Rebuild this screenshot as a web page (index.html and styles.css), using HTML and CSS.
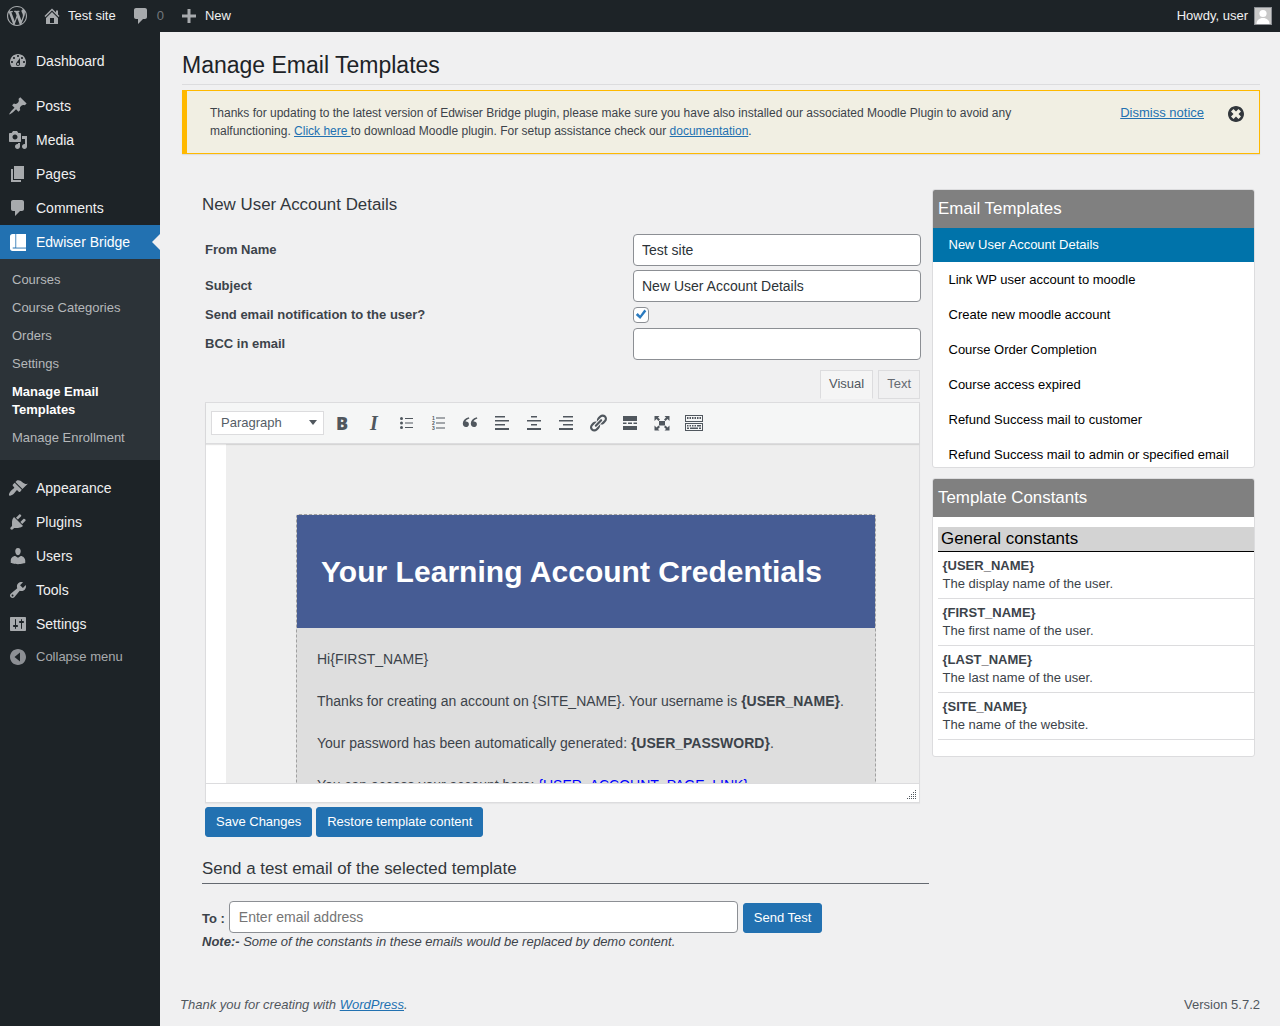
FILE: index.html
```html
<!DOCTYPE html>
<html>
<head>
  <title>Manage Email Templates</title>
  <link rel="stylesheet" href="styles.css">
</head>
<body>
  <!-- Admin bar -->
  <div class="adminbar">
    <svg class="bar-logo" viewBox="0 0 20 20"><path d="M20 10c0-5.51-4.49-10-10-10C4.48 0 0 4.49 0 10c0 5.52 4.48 10 10 10 5.51 0 10-4.48 10-10zM7.78 15.37L4.37 6.22c.55-.02 1.17-.08 1.17-.08.5-.06.44-1.13-.06-1.11 0 0-1.45.11-2.37.11-.18 0-.37 0-.58-.01C4.12 2.69 6.87 1.11 10 1.11c2.33 0 4.45.87 6.05 2.34-.68-.11-1.65.39-1.65 1.58 0 .74.45 1.36.9 2.1.35.61.55 1.36.55 2.46 0 1.49-1.4 5-1.4 5l-3.03-8.37c.54-.02.82-.17.82-.17.5-.05.44-1.25-.06-1.22 0 0-1.44.12-2.38.12-.87 0-2.33-.12-2.33-.12-.5-.03-.56 1.2-.06 1.22l.92.08 1.26 3.41zM17.41 10c.24-.64.74-1.87.43-4.25.7 1.29 1.05 2.71 1.05 4.25 0 3.29-1.73 6.24-4.4 7.78.97-2.59 1.94-5.2 2.92-7.78zM6.1 18.09C3.12 16.65 1.11 13.53 1.11 10c0-1.3.23-2.48.72-3.59C3.25 10.3 4.67 14.2 6.1 18.09zm4.03-6.63l2.58 6.98c-.86.29-1.76.45-2.71.45-.79 0-1.57-.11-2.29-.33.81-2.38 1.62-4.74 2.42-7.1z"/></svg>
    <svg class="bar-icon home" viewBox="0 0 20 20"><path d="M16 8.5l1.53 1.53-1.06 1.06L10 4.62l-6.47 6.47-1.06-1.06L10 2.5l4 4v-2h2v4zm-6-2.46l6 5.99V18H4v-5.97zM12 17v-5H8v5h4z"/></svg>
    <span class="bar-text site">Test site</span>
    <svg class="bar-icon comment" viewBox="0 0 20 20"><path d="M5 2h9c1.1 0 2 .9 2 2v7c0 1.1-.9 2-2 2h-2l-5 5v-5H5c-1.1 0-2-.9-2-2V4c0-1.1.9-2 2-2z"/></svg>
    <span class="bar-text count">0</span>
    <svg class="bar-icon plus" viewBox="0 0 20 20"><path d="M17 8.5v3h-5.5V17h-3v-5.500H3v-3h5.500V3h3v5.500z"/></svg>
    <span class="bar-text">New</span>
    <span class="bar-text howdy">Howdy, user</span>
    <span class="avatar">
      <svg viewBox="0 0 16 16"><circle cx="8" cy="5.500" r="3.600"/><path d="M1.500 16c0-3.600 2.600-6 6.500-6s6.500 2.400 6.500 6z"/></svg>
    </span>
  </div>

  <div class="page">
    <!-- Sidebar -->
    <div class="sidebar">
      <a class="menu-item"><svg viewBox="0 0 20 20"><path d="M3.760 16h12.480c1.100-1.370 1.760-3.110 1.760-5 0-4.420-3.580-8-8-8s-8 3.580-8 8c0 1.890.660 3.630 1.760 5zM10 4c.550 0 1 .450 1 1s-.450 1-1 1-1-.450-1-1 .450-1 1-1zM6 6c.550 0 1 .450 1 1s-.450 1-1 1-1-.450-1-1 .450-1 1-1zm8 0c.550 0 1 .450 1 1s-.450 1-1 1-1-.450-1-1 .450-1 1-1zm-5.370 5.550L12 7v6c0 1.100-.900 2-2 2s-2-.900-2-2c0-.570.240-1.080.630-1.450zM4 10c.550 0 1 .450 1 1s-.450 1-1 1-1-.450-1-1 .450-1 1-1zm12 0c.550 0 1 .450 1 1s-.450 1-1 1-1-.450-1-1 .450-1 1-1zm-5 3c0-.550-.450-1-1-1s-1 .450-1 1 .450 1 1 1 1-.450 1-1z"/></svg>Dashboard</a>
      <div class="menu-sep"></div>
      <a class="menu-item"><svg viewBox="0 0 20 20"><path d="M10.440 3.020l1.820-1.820 6.360 6.350-1.830 1.820c-1.050-.680-2.480-.570-3.410.360l-.750.750c-.920.930-1.040 2.350-.350 3.410l-1.830 1.820-2.410-2.410-2.800 2.790c-.420.420-3.380 2.710-3.800 2.290s1.860-3.390 2.280-3.810l2.790-2.790L4.100 9.360l1.830-1.820c1.050.690 2.480.570 3.400-.360l.750-.750c.930-.920 1.050-2.350.360-3.410z"/></svg>Posts</a>
      <a class="menu-item"><svg viewBox="0 0 20 20"><path d="M13 11V4c0-.550-.450-1-1-1h-1.670L9 1H5L3.670 3H2c-.550 0-1 .450-1 1v7c0 .550.450 1 1 1h10c.550 0 1-.450 1-1zM7 4.500c1.380 0 2.500 1.120 2.500 2.500S8.380 9.500 7 9.500 4.500 8.380 4.500 7 5.620 4.500 7 4.500zM14 6h5v10.500c0 1.380-1.120 2.500-2.500 2.500S14 17.880 14 16.500s1.120-2.500 2.500-2.500c.170 0 .340.020.500.050V9h-3V6zm-4 8.050V13h2v3.500c0 1.380-1.120 2.500-2.500 2.500S7 17.880 7 16.500 8.120 14 9.500 14c.170 0 .340.020.500.050z"/></svg>Media</a>
      <a class="menu-item"><svg viewBox="0 0 20 20"><path d="M6 15V2h10v13H6zm-1 1h8v2H3V5h2v11z"/></svg>Pages</a>
      <a class="menu-item"><svg viewBox="0 0 20 20"><path d="M5 2h9c1.100 0 2 .900 2 2v7c0 1.100-.900 2-2 2h-2l-5 5v-5H5c-1.100 0-2-.900-2-2V4c0-1.100.900-2 2-2z"/></svg>Comments</a>
      <a class="menu-item active"><svg viewBox="0 0 20 20"><path d="M8.200 2H18v13.600H8.200z"/><path d="M7.400 2H4.500C3 2 2 3 2 4.500v12C2 18 3 19 4.500 19H18v-2.600H5.200c-.500 0-.800-.200-.800-.500s.300-.500.800-.500h2.200z"/></svg>Edwiser Bridge</a>
      <div class="submenu">
        <a>Courses</a>
        <a>Course Categories</a>
        <a>Orders</a>
        <a>Settings</a>
        <a class="current">Manage Email Templates</a>
        <a>Manage Enrollment</a>
      </div>
      <div class="menu-sep"></div>
      <a class="menu-item"><svg viewBox="0 0 20 20"><path d="M14.480 11.060L7.410 3.990l1.500-1.500c.500-.560 2.300-.470 3.510.320 1.210.800 1.430 1.280 2.910 2.100 1.180.640 2.450 1.260 4.450.850zm-.710.710L6.700 4.700 4.930 6.470c-.390.390-.390 1.020 0 1.410l1.060 1.060c.390.390.390 1.030 0 1.420-.600.600-1.430 1.110-2.210 1.690-.350.260-.700.530-1.010.840-1.340 1.340-2.290 3.800-1.560 4.530.750.750 3.240-.240 4.560-1.560.310-.310.580-.660.840-1.010.580-.780 1.090-1.610 1.690-2.210.390-.390 1.030-.390 1.420 0l1.060 1.060c.390.390 1.020.390 1.410 0z"/></svg>Appearance</a>
      <a class="menu-item"><svg viewBox="0 0 20 20"><path d="M13.110 4.360L9.870 7.600 8 5.730l3.240-3.240c.350-.340 1.050-.200 1.560.320.520.510.660 1.210.310 1.550zm-8 1.770l.910-1.120 9.010 9.010-1.190.840c-.710.710-2.630 1.160-3.820 1.160H6.140L4.900 17.260c-.590.590-1.540.590-2.120 0-.590-.580-.590-1.530 0-2.120l1.240-1.240v-3.880c0-1.130.400-3.190 1.090-3.890zm7.260 3.970l3.240-3.240c.340-.350 1.040-.210 1.550.310.520.510.660 1.210.310 1.550l-3.240 3.250z"/></svg>Plugins</a>
      <a class="menu-item"><svg viewBox="0 0 20 20"><path d="M10 9.250c-2.270 0-2.730-3.440-2.730-3.440C7 4.020 7.820 2 9.970 2c2.160 0 2.980 2.020 2.710 3.810 0 0-.410 3.440-2.680 3.440zm0 2.570L12.720 10c2.390 0 4.520 2.330 4.520 4.530v2.490s-3.650 1.130-7.240 1.130c-3.650 0-7.240-1.130-7.240-1.130v-2.490c0-2.250 1.940-4.480 4.470-4.480z"/></svg>Users</a>
      <a class="menu-item"><svg viewBox="0 0 20 20"><path d="M16.680 9.770c-1.340 1.340-3.300 1.670-4.950.990l-5.410 6.520c-.990.990-2.590.990-3.580 0s-.990-2.590 0-3.570l6.520-5.420c-.680-1.650-.350-3.610.990-4.950 1.280-1.280 3.120-1.620 4.720-1.060l-2.890 2.890 2.820 2.820 2.860-2.870c.530 1.580.180 3.390-1.080 4.650zM3.810 16.210c.400.390 1.040.390 1.430 0 .400-.400.400-1.040 0-1.430-.390-.400-1.030-.400-1.430 0-.390.390-.390 1.030 0 1.430z"/></svg>Tools</a>
      <a class="menu-item"><svg viewBox="0 0 20 20"><path d="M18 16V4c0-.550-.450-1-1-1H3c-.550 0-1 .450-1 1v12c0 .550.450 1 1 1h14c.550 0 1-.450 1-1zM8 11h1c.550 0 1 .450 1 1s-.450 1-1 1H8v1.500c0 .280-.220.500-.500.500s-.500-.220-.500-.500V13H6c-.550 0-1-.450-1-1s.450-1 1-1h1V5.500c0-.280.220-.500.500-.500s.500.220.500.500V11zm5-2h-1c-.550 0-1-.450-1-1s.450-1 1-1h1V5.500c0-.280.220-.500.500-.500s.500.220.500.500V7h1c.550 0 1 .450 1 1s-.450 1-1 1h-1v5.500c0 .280-.220.500-.500.500s-.500-.220-.500-.500V9z"/></svg>Settings</a>
      <a class="menu-item collapse"><svg viewBox="0 0 20 20"><path d="M10 18c4.420 0 8-3.580 8-8s-3.580-8-8-8-8 3.580-8 8 3.580 8 8 8zm2-3.500L6.500 10 12 5.500v9z"/></svg>Collapse menu</a>
    </div>

    <!-- Main content -->
    <div class="main">
      <h1 class="page-title">Manage Email Templates</h1>

      <div class="notice">
        <p class="notice-text">Thanks for updating to the latest version of Edwiser Bridge plugin, please make sure you have also installed our associated Moodle Plugin to avoid any malfunctioning. <a href="#">Click here </a>to download Moodle plugin. For setup assistance check our <a href="#">documentation</a>.</p>
        <a class="dismiss" href="#">Dismiss notice</a>
        <svg class="dismiss-icon" viewBox="0 0 20 20"><path d="M10 2c4.420 0 8 3.580 8 8s-3.580 8-8 8-8-3.580-8-8 3.580-8 8-8zm5 10.500L12.500 10 15 7.500 12.500 5 10 7.500 7.500 5 5 7.500 7.500 10 5 12.500 7.500 15 10 12.500 12.500 15z"/></svg>
      </div>

      <div class="columns">
        <div class="left-col">
          <h3 class="section-title">New User Account Details</h3>

          <div class="form-row">
            <label>From Name</label>
            <input type="text" class="field" value="Test site">
          </div>
          <div class="form-row">
            <label>Subject</label>
            <input type="text" class="field" value="New User Account Details">
          </div>
          <div class="form-row check-row">
            <label>Send email notification to the user?</label>
            <span class="checkbox"><svg viewBox="0 0 14 14"><path d="M1.800 7l1.900-1.900 2.400 2.500 4.300-6.100 1.900 1.700L6.200 11z"/></svg></span>
          </div>
          <div class="form-row">
            <label>BCC in email</label>
            <input type="text" class="field">
          </div>

          <div class="editor-tabs">
            <span class="tab tab-on">Visual</span>
            <span class="tab">Text</span>
          </div>

          <div class="editor">
            <div class="toolbar">
              <div class="format-select">Paragraph<span class="caret"></span></div>
              <span class="tool tool-b">B</span>
              <span class="tool tool-i">I</span>
              <span class="tool"><svg viewBox="0 0 20 20"><circle cx="5.500" cy="5.500" r="1.500"/><circle cx="5.500" cy="10" r="1.500"/><circle cx="5.500" cy="14.500" r="1.500"/><rect x="9" y="5" width="8" height="1"/><rect x="9" y="9.500" width="8" height="1"/><rect x="9" y="14" width="8" height="1"/></svg></span>
              <span class="tool"><svg viewBox="0 0 20 20"><text class="ol-num" x="4" y="6.500">1</text><text class="ol-num" x="4" y="11.500">2</text><text class="ol-num" x="4" y="16.500">3</text><rect x="8" y="4.500" width="9" height="1"/><rect x="8" y="9.500" width="9" height="1"/><rect x="8" y="14.500" width="9" height="1"/></svg></span>
              <span class="tool"><svg viewBox="0 0 20 20"><path d="M9.400 5.400C6.800 6.200 5.700 7.500 5.500 8.600c1.800-.300 3.400.800 3.400 2.600 0 1.700-1.300 2.900-2.900 2.900-1.900 0-3.200-1.400-3.200-3.600 0-3 2-5.300 6-6.300zM17.400 5.400c-2.600.800-3.700 2.100-3.900 3.200 1.800-.300 3.400.800 3.400 2.600 0 1.700-1.300 2.900-2.900 2.900-1.900 0-3.200-1.400-3.200-3.600 0-3 2-5.300 6-6.300z"/></svg></span>
              <span class="tool"><svg viewBox="0 0 20 20"><rect x="3" y="3" width="10" height="1.500"/><rect x="3" y="7" width="14" height="1.500"/><rect x="3" y="11" width="10" height="1.500"/><rect x="3" y="15" width="14" height="2"/></svg></span>
              <span class="tool"><svg viewBox="0 0 20 20"><rect x="7" y="3" width="6" height="1.500"/><rect x="3" y="7" width="14" height="1.500"/><rect x="7" y="11" width="6" height="1.500"/><rect x="3" y="15" width="14" height="2"/></svg></span>
              <span class="tool"><svg viewBox="0 0 20 20"><rect x="7" y="3" width="10" height="1.500"/><rect x="3" y="7" width="14" height="1.500"/><rect x="7" y="11" width="10" height="1.500"/><rect x="3" y="15" width="14" height="2"/></svg></span>
              <span class="tool"><svg viewBox="0 0 20 20"><path d="M17.740 2.760c1.680 1.690 1.680 4.410 0 6.100l-1.530 1.520c-1.120 1.120-2.700 1.470-4.140 1.090l2.620-2.610.760-.770.760-.760c.840-.840.840-2.200 0-3.040-.840-.850-2.200-.850-3.040 0l-.770.760-3.380 3.380c-.370-1.440-.020-3.020 1.100-4.140l1.520-1.530c1.690-1.680 4.420-1.680 6.100 0zM8.590 13.430l5.340-5.340c.420-.420.420-1.100 0-1.520-.440-.430-1.130-.390-1.530 0l-5.330 5.340c-.420.420-.420 1.100 0 1.520.440.430 1.130.390 1.520 0zm-.760 2.290l4.140-4.150c.380 1.440.030 3.020-1.090 4.140l-1.520 1.530c-1.690 1.680-4.410 1.680-6.100 0-1.680-1.680-1.680-4.420 0-6.100l1.530-1.520c1.120-1.120 2.700-1.470 4.140-1.100l-4.140 4.150c-.850.840-.850 2.200 0 3.050.840.840 2.200.840 3.040 0z"/></svg></span>
              <span class="tool"><svg viewBox="0 0 20 20"><rect x="3" y="3" width="14" height="5"/><rect x="3" y="9.500" width="3.500" height="1.500"/><rect x="8" y="9.500" width="4" height="1.500"/><rect x="13.500" y="9.500" width="3.500" height="1.500"/><rect x="3" y="13" width="14" height="4"/></svg></span>
              <span class="tool"><svg viewBox="0 0 20 20"><rect x="7" y="8" width="6" height="4.500"/><path d="M2.500 3h5L6 4.500l2 2L6.500 8l-2-2L2.500 8zM17.500 3h-5L14 4.500l-2 2L13.500 8l2-2 2 2zM2.500 17.500h5L6 16l2-2-1.500-1.500-2 2-2-2zM17.500 17.500h-5L14 16l-2-2 1.500-1.500 2 2 2-2z"/></svg></span>
              <span class="tool"><svg class="wide-icon" viewBox="0 0 18 16"><path fill-rule="evenodd" d="M0 0h18v7H0zM1 1v5h16V1zM0 8h18v8H0zM1 9v6h16V9z"/><path d="M2 2h1.500v2H2zM4.500 2H6v2H4.500zM7 2h1.500v2H7zM9.500 2H11v2H9.500zM12 2h1.500v2H12zM14.500 2H16v2h-1.500zM2 10h1.500v1.500H2zM4.500 10H6v1.500H4.500zM7 10h1.500v1.500H7zM9.500 10H11v1.500H9.500zM12 10h4v1.500h-4zM2 12.500h2V14H2zM5 12.500h8V14H5zM14 12.500h2V14h-2z"/></svg></span>
            </div>

            <div class="editor-body">
              <div class="editor-margin"></div>
              <div class="editor-canvas">
                <div class="mail">
                  <div class="mail-head">Your Learning Account Credentials</div>
                  <div class="mail-body">
                    <p>Hi{FIRST_NAME}</p>
                    <p>Thanks for creating an account on {SITE_NAME}. Your username is <b>{USER_NAME}</b>.</p>
                    <p>Your password has been automatically generated: <b>{USER_PASSWORD}</b>.</p>
                    <p>You can access your account here: <a href="#">{USER_ACCOUNT_PAGE_LINK}</a></p>
                  </div>
                </div>
              </div>
            </div>

            <div class="statusbar">
              <svg viewBox="0 0 10 10"><path d="M8 0h1v1H8zM6 2h1v1H6zM8 2h1v1H8zM4 4h1v1H4zM6 4h1v1H6zM8 4h1v1H8zM2 6h1v1H2zM4 6h1v1H4zM6 6h1v1H6zM8 6h1v1H8zM0 8h1v1H0zM2 8h1v1H2zM4 8h1v1H4zM6 8h1v1H6zM8 8h1v1H8z"/></svg>
            </div>
          </div>

          <div class="form-actions">
            <button class="btn">Save Changes</button>
            <button class="btn btn-restore">Restore template content</button>
          </div>

          <h3 class="section-title test-title">Send a test email of the selected template</h3>
          <div class="test-row">
            <b>To :</b>
            <input type="text" class="field test-field" placeholder="Enter email address">
            <button class="btn">Send Test</button>
          </div>
          <p class="test-note"><b>Note:-</b> Some of the constants in these emails would be replaced by demo content.</p>
        </div>

        <div class="right-col">
          <div class="side-box templates">
            <h3 class="side-head">Email Templates</h3>
            <a class="tpl selected">New User Account Details</a>
            <a class="tpl">Link WP user account to moodle</a>
            <a class="tpl">Create new moodle account</a>
            <a class="tpl">Course Order Completion</a>
            <a class="tpl">Course access expired</a>
            <a class="tpl">Refund Success mail to customer</a>
            <a class="tpl">Refund Success mail to admin or specified email</a>
          </div>

          <div class="side-box constants">
            <h3 class="side-head">Template Constants</h3>
            <div class="const-group">
              <div class="const-title">General constants</div>
              <div class="const"><b>{USER_NAME}</b><span>The display name of the user.</span></div>
              <div class="const"><b>{FIRST_NAME}</b><span>The first name of the user.</span></div>
              <div class="const"><b>{LAST_NAME}</b><span>The last name of the user.</span></div>
              <div class="const"><b>{SITE_NAME}</b><span>The name of the website.</span></div>
            </div>
          </div>
        </div>
      </div>

      <div class="footer">
        <i>Thank you for creating with <a href="#">WordPress</a>.</i>
        <span>Version 5.7.2</span>
      </div>
    </div>
  </div>
</body>
</html>
```

FILE: styles.css
```css
* {
  box-sizing: border-box;
}

body {
  margin: 0;
  background: #f0f0f1;
  color: #3c434a;
  font-family: "Liberation Sans", Arial, sans-serif;
  font-size: 13px;
  line-height: 18px;
}

a {
  color: #2271b1;
}

/* Admin bar */
.adminbar {
  display: flex;
  align-items: center;
  height: 32px;
  background: #1d2327;
  color: #f0f0f1;
  fill: #a7aaad;
}

.bar-logo {
  width: 20px;
  height: 20px;
  margin-left: 7px;
  margin-right: 15px;
}

.bar-icon {
  width: 20px;
  height: 20px;
}

.bar-icon.home {
  margin-right: 6px;
}

.bar-text.site {
  margin-right: 15px;
}

.bar-text.count {
  color: #72777c;
  margin-left: 6px;
  margin-right: 15px;
}

.bar-icon.plus {
  margin-right: 6px;
}

.bar-text.howdy {
  margin-left: auto;
  margin-right: 6px;
}

.avatar {
  width: 18px;
  height: 18px;
  margin-right: 8px;
  background: #c8c8c8;
  border: 1px solid #8c8f94;
  fill: #fff;
  overflow: hidden;
}

.avatar svg {
  display: block;
  width: 16px;
  height: 16px;
}

/* Sidebar */
.page {
  display: flex;
  min-height: 994px;
}

.sidebar {
  flex: 0 0 160px;
  background: #1d2327;
  padding-top: 12px;
}

.menu-item {
  position: relative;
  display: flex;
  align-items: center;
  height: 34px;
  padding-left: 8px;
  color: #f0f0f1;
  font-size: 14px;
  fill: #a7aaad;
}

.menu-item svg {
  width: 20px;
  height: 20px;
  margin-right: 8px;
}

.menu-sep {
  height: 11px;
}

.menu-item.active {
  background: #2271b1;
  color: #fff;
  fill: #fff;
}

.menu-item.active::after {
  content: "";
  position: absolute;
  right: 0;
  top: 9px;
  border: 8px solid transparent;
  border-right-color: #f0f0f1;
  border-left-width: 0;
}

.menu-item.collapse {
  padding-bottom: 2px;
  color: #a7aaad;
  font-size: 13px;
  fill: #8c8f94;
}

.submenu {
  background: #2c3338;
  padding: 7px 0 8px;
}

.submenu a {
  display: block;
  padding: 5px 12px;
  color: #b5b8ba;
}

.submenu a.current {
  color: #fff;
  font-weight: bold;
}

/* Main area */
.main {
  flex: 1;
  min-width: 0;
  padding: 18px 20px 0 22px;
}

.page-title {
  margin: 0;
  padding-bottom: 4px;
  border-bottom: 1px solid #dcdcde;
  color: #1d2327;
  font-size: 23px;
  font-weight: 400;
  line-height: 30px;
}

.notice {
  display: flex;
  align-items: flex-start;
  height: 64px;
  margin-top: 5px;
  padding: 13px 13px 0 23px;
  background: #f1efe3;
  border: 1px solid #ffb900;
  border-left-width: 5px;
  box-shadow: 0 1px 1px rgba(0, 0, 0, .08);
  font-size: 12px;
}

.notice-text {
  flex: 0 0 820px;
  margin: 0;
}

.dismiss {
  margin-left: auto;
  font-size: 13px;
  white-space: nowrap;
}

.dismiss-icon {
  width: 20px;
  height: 20px;
  margin-left: 22px;
  fill: #32373c;
}

.columns {
  display: flex;
  gap: 3px;
  margin-top: 35px;
  padding-left: 20px;
  padding-right: 5px;
}

.left-col {
  flex: 0 0 727px;
  padding-top: 6px;
}

.section-title {
  margin: 0 0 19px;
  color: #32373c;
  font-size: 16.9px;
  font-weight: 400;
  line-height: 20px;
}

.form-row {
  display: grid;
  grid-template-columns: 428px 288px;
  align-items: center;
  height: 32px;
  margin-bottom: 4px;
  padding-left: 3px;
}

.form-row label {
  font-weight: bold;
  margin-top: -1px;
}

.check-row {
  height: 26px;
  margin-bottom: 0;
  margin-top: -4px;
}

.field {
  width: 100%;
  height: 32px;
  padding: 0 8px;
  background: #fff;
  border: 1px solid #8c8f94;
  border-radius: 4px;
  color: #2c3338;
  font-family: inherit;
  font-size: 14px;
}

.checkbox {
  width: 16px;
  height: 16px;
  background: #fff;
  border: 1px solid #8c8f94;
  border-radius: 4px;
  fill: #2b7bc0;
}

.checkbox svg {
  display: block;
  width: 14px;
  height: 14px;
}

.editor-tabs {
  display: flex;
  justify-content: flex-end;
  gap: 5px;
  margin-top: 10px;
  padding-right: 9px;
}

.tab {
  height: 29px;
  padding: 4px 8px;
  background: #f0f0f1;
  border: 1px solid #dcdcde;
  color: #646970;
}

.tab-on {
  background: #f5f5f5;
  border-bottom-color: #f5f5f5;
  color: #50575e;
}

/* Editor */
.editor {
  width: 715px;
  margin-top: 3px;
  margin-left: 3px;
  background: #fff;
  border: 1px solid #dcdcde;
  box-shadow: 0 1px 1px rgba(0, 0, 0, .04);
}

.toolbar {
  position: relative;
  display: flex;
  align-items: center;
  height: 41px;
  padding-left: 5px;
  background: #f5f6f6;
  border-bottom: 1px solid #dcdcde;
  box-shadow: 0 1px 1px rgba(0, 0, 0, .1);
  fill: #50575e;
}

.format-select {
  position: relative;
  width: 113px;
  height: 24px;
  margin-top: -1px;
  margin-right: 2px;
  padding: 2px 9px;
  background: #fff;
  border: 1px solid #dcdcde;
  color: #555d66;
}

.caret {
  position: absolute;
  right: 6px;
  top: 8px;
  border: 4px solid transparent;
  border-top: 5px solid #50575e;
  border-bottom-width: 0;
}

.tool {
  display: flex;
  align-items: center;
  justify-content: center;
  width: 32px;
  height: 32px;
  color: #50575e;
}

.tool svg {
  width: 20px;
  height: 20px;
}

.tool svg.wide-icon {
  width: 18px;
  height: 16px;
}

.ol-num {
  font-size: 5px;
  font-weight: bold;
}

.tool-b {
  font-family: "Open Sans", sans-serif;
  font-size: 18px;
  font-weight: 800;
}

.tool-i {
  font-family: "Liberation Serif", serif;
  font-size: 20px;
  font-style: italic;
  font-weight: bold;
}

.editor-body {
  display: flex;
  height: 339px;
  overflow: hidden;
}

.editor-margin {
  flex: 0 0 20px;
  background: #fff;
}

.editor-canvas {
  flex: 1;
  padding: 70px 0 0 70px;
  background: #eee;
}

.mail {
  width: 580px;
  background: #dedede;
  border: 1px dashed #a0a0a0;
  border-radius: 3px 3px 0 0;
}

.mail-head {
  display: flex;
  align-items: center;
  height: 113px;
  padding-left: 24px;
  background: #465c94;
  color: #fff;
  font-size: 30px;
  font-weight: bold;
  letter-spacing: .03px;
}

.mail-body {
  padding: 21px 20px 20px;
  font-size: 14px;
  line-height: 21px;
}

.mail-body p {
  margin: 0 0 21px;
}

.mail-body a {
  color: #00f;
}

.statusbar {
  display: flex;
  justify-content: flex-end;
  align-items: flex-end;
  height: 19px;
  padding: 0 2px 2px 0;
  background: #fff;
  border-top: 1px solid #dcdcde;
  fill: #50575e;
}

.statusbar svg {
  width: 10px;
  height: 10px;
}

.form-actions {
  display: flex;
  gap: 4px;
  margin-top: 4px;
  margin-left: 3px;
}

.btn {
  height: 30px;
  padding: 0 10px 2px;
  background: #2271b1;
  border: 1px solid #2271b1;
  border-radius: 3px;
  color: #fff;
  font-family: inherit;
  font-size: 13px;
}

.btn-restore {
  width: 167px;
  padding: 0 0 2px;
}

.test-title {
  height: 25px;
  margin: 22px 0 17px;
  padding-bottom: 4px;
  border-bottom: 1px solid #646970;
}

.test-row {
  display: flex;
  align-items: center;
  gap: 5px;
  height: 32px;
}

.test-row b {
  margin-top: 4px;
  margin-right: -1px;
}

.test-row .btn {
  margin-top: 2px;
}

.test-field {
  width: 509px;
  padding-left: 9px;
}

.test-note {
  margin: 0;
  font-style: italic;
}

/* Right column */
.right-col {
  flex: 0 0 323px;
}

.side-box {
  background: #fff;
  border: 1px solid #dcdcde;
  border-radius: 3px;
  overflow: hidden;
}

.side-head {
  height: 38px;
  margin: 0;
  padding: 0 5px;
  background: #808080;
  color: #fff;
  font-size: 16.9px;
  font-weight: 400;
  line-height: 37px;
}

.templates {
  height: 279px;
}

.tpl {
  display: block;
  height: 34px;
  margin-bottom: 1px;
  padding: 8px 15.5px;
  color: #000;
}

.tpl.selected {
  background: #0073aa;
  color: #fff;
}

.constants {
  height: 279px;
  margin-top: 10px;
}

.const-group {
  padding: 10px 0 0 5px;
}

.const-title {
  height: 25px;
  padding-left: 3px;
  background: #d3d3d3;
  border-bottom: 1px solid #000;
  color: #000;
  font-size: 16.9px;
  line-height: 23px;
}

.const {
  padding: 5px 4.5px;
  border-bottom: 1px solid #dcdcde;
}

.const b,
.const span {
  display: block;
}

.footer {
  display: flex;
  justify-content: space-between;
  margin-top: 45px;
  margin-left: -2px;
  color: #50575e;
}
```
